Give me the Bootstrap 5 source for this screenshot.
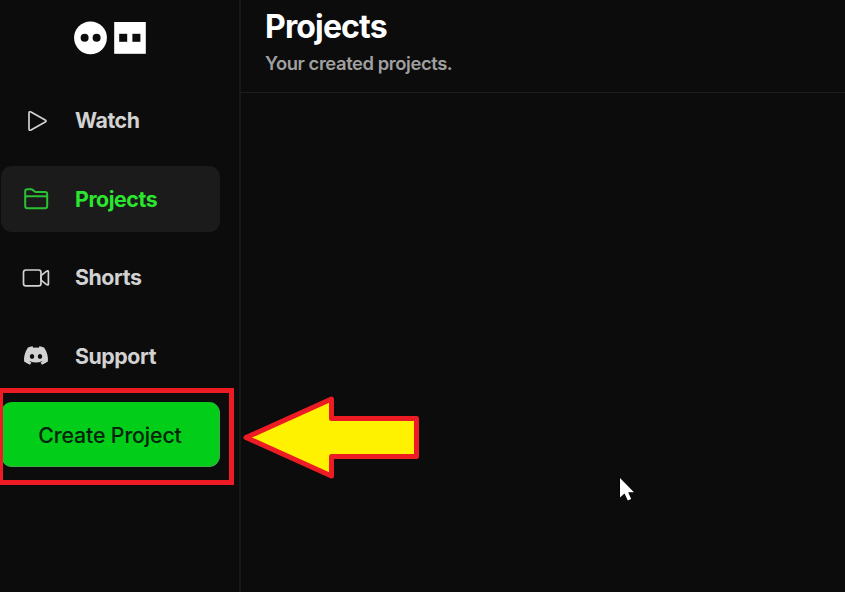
<!DOCTYPE html>
<html lang="en" data-bs-theme="dark">
<head>
<meta charset="utf-8">
<meta name="viewport" content="width=device-width, initial-scale=1">
<title>Projects</title>
<link href="https://cdn.jsdelivr.net/npm/bootstrap@5.3.0/dist/css/bootstrap.min.css" rel="stylesheet">
<style>
  body { background: #0c0c0c; font-family: Inter, "Liberation Sans", sans-serif; height: 592px; }
  .side { width: 241px; padding: 0 19px 0 1px; border-right: 2px solid #181818; }
  .brand { height: 87.500px; padding: 20px 0 0 72px; }
  .side-menu { gap: 12.500px; }
  .side-item { height: 66px; padding: 0 0 0 20px; gap: 24px; border-radius: 11px; color: #d2d2d2; font-size: 21.300px; font-weight: 700; letter-spacing: -.42px; line-height: 1; }
  .side-item span { padding-top: 1px; }
  .side-item svg { width: 30px; height: 30px; flex: none; }
  .side-item.active { background: #1b1b1b; color: #2be52f; }
  .side-item.active svg { color: #2cc035; }
  .side-item:hover { color: #fff; }
  .btn-create { height: 65px; border-radius: 11px; background: #02cd19; color: #04240a; font-size: 21.300px; font-weight: 500; letter-spacing: -.13px; line-height: 1; padding: 4px 0 0; border: 0; border-right: 1px solid #3fae4a; border-bottom: 1px solid #3fae4a; }
  .page-head { height: 93px; padding: 7px 0 0 24px; border-bottom: 1px solid #1c1c1c; }
  .page-title { font-size: 32px; font-weight: 700; letter-spacing: -.85px; line-height: 39px; color: #fff; }
  .page-sub { font-size: 18.400px; font-weight: 600; letter-spacing: -.42px; line-height: 24px; color: #a0a0a0; margin-top: 5px; }
  .frame-mark { left: -2px; top: 388px; width: 236px; height: 97px; border: 5px solid #ed1c24; }
  .arrow-mark { left: 240px; top: 390px; }
  .pointer-mark { left: 616px; top: 474px; }
</style>
</head>
<body class="d-flex overflow-hidden position-relative">
  <aside class="side d-flex flex-column flex-shrink-0">
    <div class="brand">
      <svg class="d-block" width="74" height="36" viewBox="0 0 74 36">
        <circle cx="17.500" cy="17.800" r="16.400" fill="#fff"/>
        <circle cx="11.600" cy="17.800" r="4" fill="#0c0c0c"/>
        <circle cx="23.600" cy="17.800" r="4" fill="#0c0c0c"/>
        <rect x="41.200" y="2" width="31.600" height="31.800" fill="#fff"/>
        <rect x="46.200" y="13.800" width="8" height="8" fill="#0c0c0c"/>
        <rect x="59.400" y="13.800" width="8" height="8" fill="#0c0c0c"/>
      </svg>
    </div>
    <nav class="side-menu d-flex flex-column">
      <a class="side-item d-flex align-items-center text-decoration-none" href="#">
        <svg viewBox="0 0 30 30" fill="none" stroke="currentColor" stroke-width="1.700" stroke-linejoin="round"><path d="M8 7.200v15.600q0 2.200 2 1.100l14.200-7.800q1.700-1.100 0-2.200L10 6.100Q8 5 8 7.200z"/></svg>
        <span>Watch</span>
      </a>
      <a class="side-item active d-flex align-items-center text-decoration-none" href="#">
        <svg viewBox="0 0 30 30" fill="none" stroke="currentColor" stroke-width="2" stroke-linejoin="round"><path d="M4.200 12V7.500q0-2.200 2.200-2.200h3.800q.9 0 1.600.6l1.900 1.600q.7.600 1.600.6h8.700q2.200 0 2.200 2.200V12M4.200 14v8q0 2.200 2.200 2.200h17.600q2.200 0 2.200-2.200v-8q0-1.800-2.200-1.800H6.400Q4.200 12.200 4.200 14zM4.200 14v-3M26.200 14v-3"/></svg>
        <span>Projects</span>
      </a>
      <a class="side-item d-flex align-items-center text-decoration-none" href="#">
        <svg viewBox="0 0 30 30" fill="none" stroke="currentColor" stroke-width="1.700" stroke-linejoin="round"><rect x="2.500" y="7" width="17.500" height="15.800" rx="2.400"/><path d="M20 12.600l5.600-4.400q1.800-1 1.800.7v12q0 1.700-1.800.7L20 17.200z"/></svg>
        <span>Shorts</span>
      </a>
      <a class="side-item d-flex align-items-center text-decoration-none" href="#">
        <svg viewBox="0 0 30 30"><g transform="translate(3 2.500) scale(1.500)" fill="currentColor"><path d="M13.545 2.907a13.227 13.227 0 0 0-3.257-1.011.05.05 0 0 0-.052.025c-.141.25-.297.577-.406.833a12.190 12.190 0 0 0-3.658 0 8.258 8.258 0 0 0-.412-.833.051.051 0 0 0-.052-.025c-1.125.194-2.220.534-3.257 1.011a.041.041 0 0 0-.021.018C.356 6.024-.213 9.047.066 12.032c.001.014.010.028.021.037a13.276 13.276 0 0 0 3.995 2.020.050.050 0 0 0 .056-.019c.308-.420.582-.863.818-1.329a.050.050 0 0 0-.028-.070 8.735 8.735 0 0 1-1.248-.595.050.050 0 0 1-.005-.085c.084-.063.168-.129.248-.195a.050.050 0 0 1 .051-.007c2.619 1.196 5.454 1.196 8.041 0a.052.052 0 0 1 .053.007c.080.066.164.132.248.195a.051.051 0 0 1-.004.085 8.254 8.254 0 0 1-1.249.594.050.050 0 0 0-.027.071c.240.465.515.909.817 1.329a.050.050 0 0 0 .056.019 13.235 13.235 0 0 0 4.001-2.020.049.049 0 0 0 .021-.037c.334-3.451-.559-6.449-2.366-9.106a.034.034 0 0 0-.020-.019Zm-8.198 7.307c-.789 0-1.438-.724-1.438-1.612 0-.889.637-1.613 1.438-1.613.807 0 1.450.730 1.438 1.613 0 .888-.637 1.612-1.438 1.612Zm5.316 0c-.788 0-1.438-.724-1.438-1.612 0-.889.637-1.613 1.438-1.613.807 0 1.451.730 1.438 1.613 0 .888-.631 1.612-1.438 1.612Z"/></g></svg>
        <span>Support</span>
      </a>
      <button class="btn btn-create w-100" type="button">Create Project</button>
    </nav>
  </aside>
  <main class="flex-grow-1">
    <header class="page-head">
      <h1 class="page-title mb-0">Projects</h1>
      <p class="page-sub mb-0">Your created projects.</p>
    </header>
  </main>

  <div class="frame-mark position-absolute"></div>
  <svg class="arrow-mark position-absolute" width="184" height="92" viewBox="0 0 184 92">
    <path d="M6 47.500L91.500 9V28.500H176.500V66.500H91.500V86z" fill="#fff200" stroke="#ed1c24" stroke-width="5" stroke-linejoin="round"/>
  </svg>
  <svg class="pointer-mark position-absolute" width="22" height="30" viewBox="0 0 22 30">
    <path d="M4 4V23.500L8.500 19.500L11.800 26.500L15.200 25L12.200 18.300H18z" fill="#fff" stroke="#000" stroke-width="1" paint-order="stroke"/>
  </svg>
  <script src="https://cdn.jsdelivr.net/npm/bootstrap@5.3.0/dist/js/bootstrap.bundle.min.js"></script>
</body>
</html>
